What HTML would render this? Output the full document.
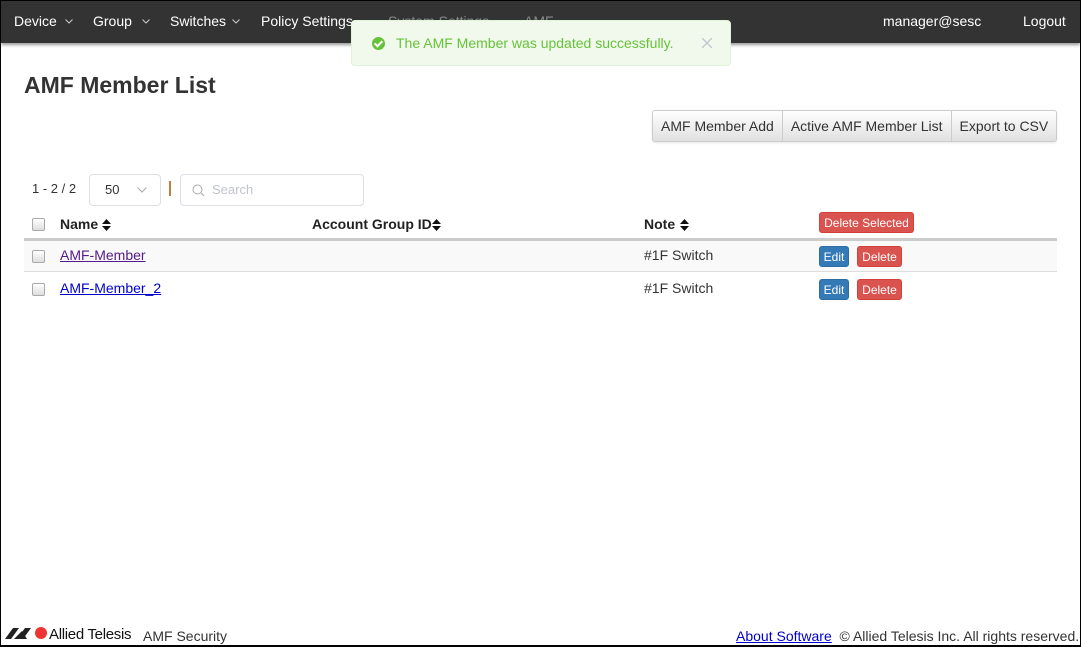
<!DOCTYPE html>
<html><head><style>
*{box-sizing:border-box;margin:0;padding:0}
body{width:1081px;height:647px;overflow:hidden;background:#fff;font-family:"Liberation Sans",sans-serif;font-size:14px;color:#333;position:relative}
.frame{position:absolute;left:0;top:0;width:1081px;height:647px;border:1px solid #000;border-bottom:2px solid #000}
.nav{position:absolute;left:1px;top:1px;width:1079px;height:42px;background:#333;box-shadow:0 2px 3px rgba(0,0,0,.4)}
.nav span{position:absolute;top:12px;color:#fff;font-size:14px;white-space:nowrap}
.nav svg{position:absolute;top:18px}
.toast{position:absolute;left:351px;top:20px;width:380px;height:46px;background:#f0f9eb;border:1px solid #e1f3d8;border-radius:4px;color:#67c23a;font-size:14px}
.toast .ic{position:absolute;left:20px;top:16px;width:13px;height:13px;border-radius:50%;background:#67c23a}
.toast .ic:after{content:"";position:absolute;left:4px;top:2px;width:3px;height:6px;border:solid #fff;border-width:0 2px 2px 0;transform:rotate(45deg)}
h1{position:absolute;left:24px;top:72px;font-size:23px;font-weight:bold;color:#333}
.bg{position:absolute;left:652px;top:110px;height:32px;display:flex;border:1px solid #ccc;border-radius:3px;background:linear-gradient(#fff,#e0e0e0);box-shadow:0 1px 2px rgba(0,0,0,.1)}
.bg div{padding:0 8px;line-height:30px;font-size:14px;border-left:1px solid #ccc;white-space:nowrap}
.bg div:first-child{border-left:0}
.abs{position:absolute;white-space:nowrap}
.sel{position:absolute;left:89px;top:174px;width:72px;height:32px;border:1px solid #dcdfe6;border-radius:4px}
.srch{position:absolute;left:180px;top:174px;width:184px;height:32px;border:1px solid #dcdfe6;border-radius:4px;color:#c0c4cc}
.cb{position:absolute;width:13px;height:13px;border:1px solid #aaa;border-radius:2px;background:linear-gradient(#fff,#ddd)}
.th{position:absolute;top:216px;font-weight:bold;font-size:14px;color:#222}
.btn{position:absolute;height:21px;border-radius:3px;color:#fff;font-size:12px;line-height:20px;text-align:center}
.red{background:#d9534f;border:1px solid #d43f3a}
.blue{background:#337ab7;border:1px solid #2e6da4}
a{color:#00c;text-decoration:underline}
</style></head><body>
<div class="nav">
<span style="left:13px">Device</span><svg style="left:64px" width="8" height="5"><path d="M0.5 0.5L4 4L7.5 0.5" stroke="#ccc" fill="none"/></svg>
<span style="left:92px">Group</span><svg style="left:141px" width="8" height="5"><path d="M0.5 0.5L4 4L7.5 0.5" stroke="#ccc" fill="none"/></svg>
<span style="left:169px">Switches</span><svg style="left:231px" width="8" height="5"><path d="M0.5 0.5L4 4L7.5 0.5" stroke="#ccc" fill="none"/></svg>
<span style="left:260px">Policy Settings</span>
<span style="left:387px;color:#888">System Settings</span>
<span style="left:523px;color:#888">AMF</span>
<span style="left:882px">manager@sesc</span>
<span style="left:1022px">Logout</span>
</div>
<div class="toast"><div class="ic"></div><span class="abs" style="left:44px;top:14px">The AMF Member was updated successfully.</span><svg class="abs" style="left:350px;top:17px" width="10" height="10"><path d="M0 0L10 10M10 0L0 10" stroke="#c0c4cc" stroke-width="1.3"/></svg></div>
<h1>AMF Member List</h1>
<div class="bg"><div>AMF Member Add</div><div>Active AMF Member List</div><div>Export to CSV</div></div>
<span class="abs" style="left:32px;top:181px;font-size:13px">1 - 2 / 2</span>
<div class="sel"><span class="abs" style="left:15px;top:7px;font-size:13px">50</span><svg class="abs" style="left:47px;top:12px" width="10" height="6"><path d="M0.5 0.5L5 5L9.5 0.5" stroke="#aaa" fill="none"/></svg></div>
<div class="abs" style="left:169px;top:181px;width:2px;height:15px;background:#c08040"></div>
<div class="srch"><svg class="abs" style="left:11px;top:9px" width="13" height="13"><circle cx="5.5" cy="5.5" r="4.5" stroke="#aaa" fill="none"/><path d="M9 9L12 12" stroke="#aaa"/></svg><span class="abs" style="left:31px;top:7px;font-size:13px">Search</span></div>
<div class="cb" style="left:32px;top:218px"></div>
<span class="th" style="left:60px">Name</span><svg class="abs" style="left:102px;top:219px" width="9" height="12"><path d="M0 5L4.5 0L9 5ZM0 7L4.5 12L9 7Z" fill="#111"/></svg>
<span class="th" style="left:312px">Account Group ID</span><svg class="abs" style="left:432px;top:219px" width="9" height="12"><path d="M0 5L4.5 0L9 5ZM0 7L4.5 12L9 7Z" fill="#111"/></svg>
<span class="th" style="left:644px">Note</span><svg class="abs" style="left:680px;top:219px" width="9" height="12"><path d="M0 5L4.5 0L9 5ZM0 7L4.5 12L9 7Z" fill="#111"/></svg>
<div class="btn red" style="left:819px;top:212px;width:95px">Delete Selected</div>
<div class="abs" style="left:24px;top:238px;width:1033px;height:3px;background:#ccc"></div>
<div class="abs" style="left:24px;top:241px;width:1033px;height:31px;background:#f9f9f9;border-bottom:1px solid #ddd"></div>
<div class="cb" style="left:32px;top:250px"></div>
<a class="abs" style="left:60px;top:247px;color:#551a8b">AMF-Member</a>
<span class="abs" style="left:644px;top:247px">#1F Switch</span>
<div class="btn blue" style="left:819px;top:246px;width:30px">Edit</div>
<div class="btn red" style="left:857px;top:246px;width:45px">Delete</div>
<div class="cb" style="left:32px;top:283px"></div>
<a class="abs" style="left:60px;top:280px">AMF-Member_2</a>
<span class="abs" style="left:644px;top:280px">#1F Switch</span>
<div class="btn blue" style="left:819px;top:279px;width:30px">Edit</div>
<div class="btn red" style="left:857px;top:279px;width:45px">Delete</div>
<svg class="abs" style="left:5px;top:627px" width="42" height="12"><polygon points="0,12 8,1 14,1 6,12" fill="#222"/><polygon points="12,12 20,1 26,1 18,12" fill="#222"/><polygon points="9,12 17,4 22,12" fill="#222"/><circle cx="36" cy="6" r="6" fill="#e33"/></svg>
<span class="abs" style="left:49px;top:626px;font-size:15px;color:#111;letter-spacing:-.3px">Allied Telesis</span>
<span class="abs" style="left:143px;top:628px;font-size:14px">AMF Security</span>
<span class="abs" style="left:736px;top:628px;font-size:14px"><a>About Software</a>&nbsp; © Allied Telesis Inc. All rights reserved.</span>
<div class="frame"></div>
</body></html>
